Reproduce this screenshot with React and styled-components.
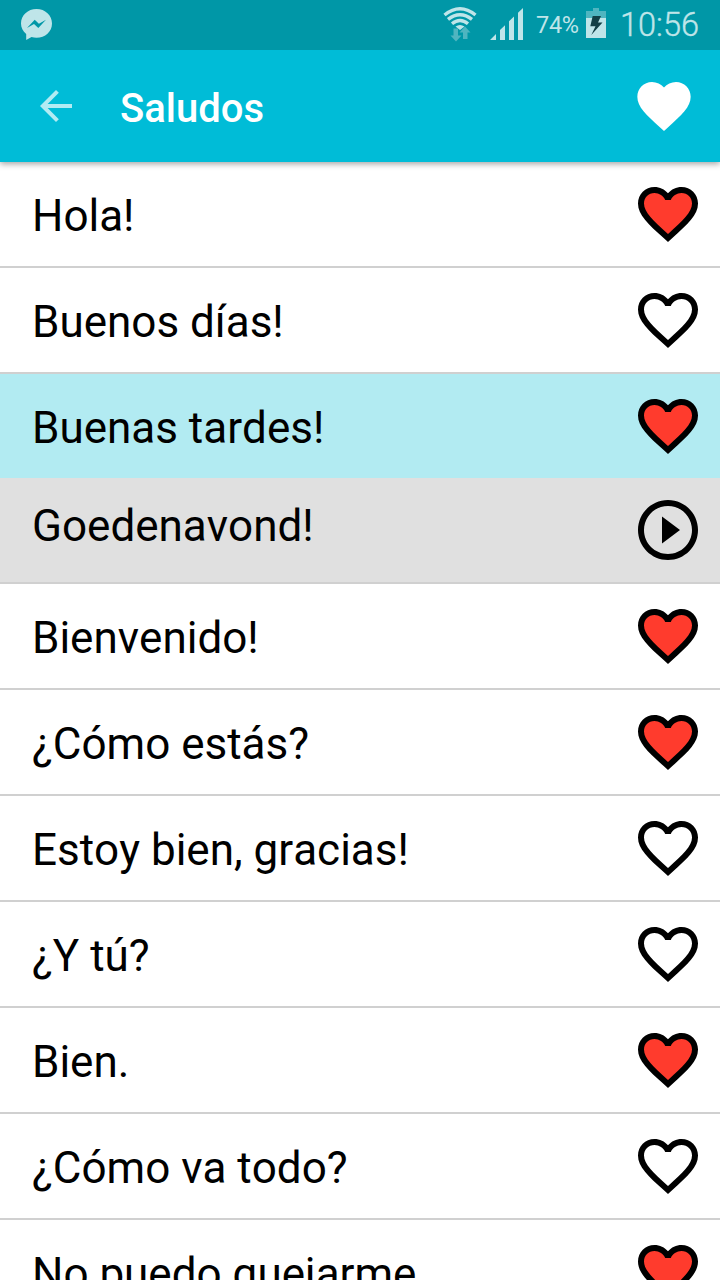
import React from 'react';
import styled, { createGlobalStyle } from 'styled-components';

const GlobalStyle = createGlobalStyle`
  html, body {
    margin: 0;
    background: #fff;
    overflow: hidden;
  }
`;

const Screen = styled.div`
  display: flex;
  flex-direction: column;
  width: 720px;
  height: 1280px;
  overflow: hidden;
  background: #fff;
  font-family: Roboto, 'Liberation Sans', sans-serif;
`;

const StatusBar = styled.div`
  display: flex;
  flex: none;
  justify-content: space-between;
  align-items: center;
  height: 50px;
  box-sizing: border-box;
  padding: 0 21px 0 15px;
  background: #0097a7;
  color: #bfe5e9;
  z-index: 2;
`;

const StatusGroup = styled.div`
  display: flex;
  align-items: center;

  svg {
    display: block;
    flex: none;
  }
`;

const Battery = styled.span`
  width: 49px;
  box-sizing: border-box;
  padding-left: 2px;
  font-size: 23.5px;
  line-height: 50px;
  letter-spacing: -0.3px;
`;

const Clock = styled.span`
  width: 82px;
  font-size: 32.5px;
  font-weight: 300;
  line-height: 50px;
  text-align: right;
  -webkit-text-stroke: 0.4px #bfe5e9;
`;

const AppBar = styled.header`
  display: flex;
  flex: none;
  align-items: center;
  height: 112px;
  box-sizing: border-box;
  padding: 0 24px 0 32px;
  background: #00bcd7;
  box-shadow: 0 2px 6px rgba(0, 0, 0, 0.36);
  z-index: 1;
`;

const Title = styled.h1`
  flex: 1;
  margin: 0;
  padding: 6px 0 0 40px;
  color: #fff;
  font-size: 40px;
  font-weight: 500;
  line-height: 48px;
`;

const Row = styled.div`
  display: flex;
  flex: none;
  justify-content: space-between;
  align-items: center;
  height: ${({ $active }) => ($active ? '104px' : '106px')};
  box-sizing: border-box;
  padding: 0 16px 0 32px;
  border-bottom: ${({ $active }) => ($active ? 'none' : '2px solid #d0d0d0')};
  background: ${({ $active, $answer }) => ($active ? '#b2ebf2' : $answer ? '#e0e0e0' : '#fff')};
`;

const Phrase = styled.span`
  padding: ${({ $answer }) => ($answer ? '0 0 8px' : '4px 0 0')};
  color: #000;
  font-size: 44px;
  line-height: 52px;
  font-kerning: none;
  white-space: nowrap;
`;

const Icon = styled.svg.attrs({ viewBox: '0 0 24 24' })`
  display: block;
  flex: none;
  width: ${({ $size }) => $size}px;
  height: ${({ $size }) => $size}px;
  fill: ${({ $color }) => $color || '#000'};
`;

const HEART =
  'M12 21.35l-1.45-1.32C5.4 15.36 2 12.28 2 8.5 2 5.42 4.42 3 7.5 3c1.74 0 3.41.81 4.5 2.09C13.09 3.81 14.76 3 16.5 3 19.58 3 22 5.42 22 8.5c0 3.78-3.4 6.86-8.55 11.54L12 21.35z';
const HEART_BORDER =
  'M16.5 3c-1.74 0-3.41.81-4.5 2.09C10.91 3.81 9.24 3 7.5 3 4.42 3 2 5.42 2 8.5c0 3.78 3.4 6.86 8.55 11.54L12 21.35l1.45-1.32C18.6 15.36 22 12.28 22 8.5 22 5.42 19.58 3 16.5 3zm-4.4 15.55l-.1.1-.1-.1C7.14 14.24 4 11.39 4 8.5 4 6.5 5.5 5 7.5 5c1.54 0 3.04.99 3.57 2.36h1.87C13.46 5.99 14.96 5 16.5 5c2 0 3.5 1.5 3.5 3.5 0 2.89-3.14 5.74-7.9 10.05z';

const phrases = [
  { text: 'Hola!', liked: true },
  { text: 'Buenos días!' },
  { text: 'Buenas tardes!', liked: true, active: true },
  { text: 'Goedenavond!', answer: true },
  { text: 'Bienvenido!', liked: true },
  { text: '¿Cómo estás?', liked: true },
  { text: 'Estoy bien, gracias!' },
  { text: '¿Y tú?' },
  { text: 'Bien.', liked: true },
  { text: '¿Cómo va todo?' },
  { text: 'No puedo quejarme.', liked: true },
];

function FavoriteIcon({ liked }) {
  return (
    <Icon $size={72}>
      {liked && (
        <path fill="#ff3b2d" d="M12 19.5C6.5 14.8 3 11.8 3 8.5 3 6 5 4 7.5 4c2 0 3.5 1 4.5 2.6C13 5 14.5 4 16.5 4 19 4 21 6 21 8.5c0 3.3-3.5 6.3-9 11z" />
      )}
      <path d={HEART_BORDER} />
    </Icon>
  );
}

function PlayIcon() {
  return (
    <Icon $size={72}>
      <path d="M10 16.5l6-4.5-6-4.5v9zM12 2C6.48 2 2 6.48 2 12s4.48 10 10 10 10-4.48 10-10S17.52 2 12 2zm0 18c-4.41 0-8-3.59-8-8s3.59-8 8-8 8 3.59 8 8-3.59 8-8 8z" />
    </Icon>
  );
}

function MessengerIcon() {
  return (
    <svg width="45" height="50" viewBox="0 0 45 50">
      <path
        fill="#bfe5e9"
        d="M21.5 9C12.8 9 6 15.3 6 23.4c0 4.2 1.9 7.9 5.2 10.5V40l5.3-3.1c1.6.5 3.3.8 5 .8C30.2 37.7 37 31.5 37 23.4S30.2 9 21.5 9z"
      />
      <path fill="#0097a7" d="M12 28l7.7-8.3 4.2 4 7.1-4-7.7 8.3-4.3-4z" />
    </svg>
  );
}

function WifiIcon() {
  return (
    <svg width="50" height="50" viewBox="0 0 50 50">
      <g fill="none" stroke="#bfe5e9" strokeWidth="3.4">
        <path d="M6.500 15q15.500-12.500 31 0" />
        <path d="M10 19.300q12-9.300 24 0" />
        <path d="M14 23.800q8-6.600 16 0" />
      </g>
      <path fill="#bfe5e9" d="M17.500 26.500q4.500-3 9 0L22 30z" />
      <path fill="#4fb5c0" d="M15.500 28.500h4.500v7h3.500L18 41.500l-5.500-6h3zM25 39v-6.500h-3.500l5.500-6 5.500 6H29.500V39z" />
    </svg>
  );
}

function SignalIcon() {
  return (
    <svg width="46" height="50" viewBox="0 0 46 50">
      <path fill="#bfe5e9" d="M2 40l6-6v6zM12 40V30l5-4.800V40zM21 40V21.300l5-4.800V40zM30 40V12.700L35 8v32z" />
    </svg>
  );
}

function BatteryIcon() {
  return (
    <svg width="34" height="50" viewBox="0 0 34 50">
      <path fill="#4fb5c0" d="M3 11h7V8h6v3h7v7H3z" />
      <path fill="#bfe5e9" d="M3 18h20v20H3z" />
      <path fill="#123f46" d="M9.700 16H18l-3 6.500h4.500L8.300 35 12.500 26.300H7.300z" />
    </svg>
  );
}

function App() {
  return (
    <Screen>
      <GlobalStyle />
      <StatusBar>
        <StatusGroup>
          <MessengerIcon />
        </StatusGroup>
        <StatusGroup>
          <WifiIcon />
          <SignalIcon />
          <Battery>74%</Battery>
          <BatteryIcon />
          <Clock>10:56</Clock>
        </StatusGroup>
      </StatusBar>
      <AppBar>
        <Icon $size={48} $color="#b2ebf3">
          <path d="M20 11H7.83l5.59-5.59L12 4l-8 8 8 8 1.41-1.41L7.83 13H20v-2z" />
        </Icon>
        <Title>Saludos</Title>
        <Icon $size={64} $color="#fff">
          <path d={HEART} />
        </Icon>
      </AppBar>
      {phrases.map(({ text, liked, active, answer }) => (
        <Row key={text} $active={active} $answer={answer}>
          <Phrase $answer={answer}>{text}</Phrase>
          {answer ? <PlayIcon /> : <FavoriteIcon liked={liked} />}
        </Row>
      ))}
    </Screen>
  );
}

export default App;
